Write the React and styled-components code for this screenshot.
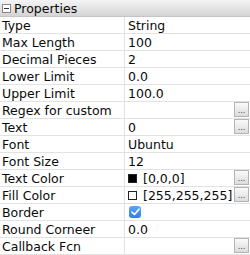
import React from "react";
import styled, { createGlobalStyle } from "styled-components";

const Global = createGlobalStyle`
  html, body { margin: 0; padding: 0; background: #fff; }
  body { font-family: "DejaVu Sans", "Liberation Sans", sans-serif; }
`;

const Panel = styled.div`
  width: 250px;
  height: 255px;
  overflow: hidden;
  background: #fff;
  font-size: 12.5px;
  color: #0a0a0a;
`;

const Header = styled.div`
  height: 17px;
  box-sizing: border-box;
  display: flex;
  align-items: center;
  gap: 3px;
  padding-left: 2px;
  background: linear-gradient(#f4f4f4, #d4d4d4);
  border-bottom: 1px solid #c4c4c4;
  font-size: 12.5px;
`;

const Toggle = styled.span`
  width: 7px;
  height: 7px;
  border: 1px solid #888;
  background: #fff;
  display: flex;
  align-items: center;
  justify-content: center;
  &::after {
    content: "";
    width: 5px;
    height: 1px;
    background: #333;
  }
`;

const Row = styled.div`
  height: 17px;
  box-sizing: border-box;
  display: grid;
  grid-template-columns: 125px 1fr;
  border-bottom: 1px solid #e2e2e2;
`;

const Name = styled.div`
  padding-left: 2px;
  border-right: 1px solid #e2e2e2;
  display: flex;
  align-items: center;
  white-space: nowrap;
  overflow: hidden;
`;

const Value = styled.div`
  padding-left: 3px;
  display: flex;
  align-items: center;
  gap: 6px;
  position: relative;
  white-space: nowrap;
`;

const Dots = styled.div`
  position: absolute;
  right: 1px;
  top: 0px;
  width: 15px;
  height: 15px;
  box-sizing: border-box;
  border: 1px solid #b4b4b4;
  background: linear-gradient(#fafafa, #dcdcdc);
  font-size: 8px;
  color: #444;
  display: flex;
  align-items: flex-end;
  justify-content: center;
  line-height: 10px;
`;

const Swatch = styled.span`
  width: 9px;
  height: 9px;
  box-sizing: border-box;
  border: 1px solid #222;
  background: ${(p) => p.$color};
`;

const Check = styled.span`
  width: 12px;
  height: 12px;
  margin-left: 1px;
  border-radius: 3px;
  background: linear-gradient(#5aa9f8, #2f7de6);
  display: flex;
  align-items: center;
  justify-content: center;
`;

const rows = [
  { n: "Type", v: "String" },
  { n: "Max Length", v: "100" },
  { n: "Decimal Pieces", v: "2" },
  { n: "Lower Limit", v: "0.0" },
  { n: "Upper Limit", v: "100.0" },
  { n: "Regex for custom", v: "", btn: true },
  { n: "Text", v: "0", btn: true },
  { n: "Font", v: "Ubuntu" },
  { n: "Font Size", v: "12" },
  { n: "Text Color", v: "[0,0,0]", color: "#000", btn: true },
  { n: "Fill Color", v: "[255,255,255]", color: "#fff", btn: true },
  { n: "Border", check: true },
  { n: "Round Corneer", v: "0.0" },
  { n: "Callback Fcn", v: "", btn: true },
];

export default function App() {
  return (
    <Panel>
      <Global />
      <Header>
        <Toggle />
        <span>Properties</span>
      </Header>
      {rows.map((r) => (
        <Row key={r.n}>
          <Name>{r.n}</Name>
          <Value>
            {r.color && <Swatch $color={r.color} />}
            {r.check ? (
              <Check>
                <svg width="9" height="8" viewBox="0 0 9 8">
                  <path d="M1 4.2 L3.5 6.5 L8 1.2" fill="none" stroke="#fff" strokeWidth="1.6" strokeLinecap="round" strokeLinejoin="round" />
                </svg>
              </Check>
            ) : (
              <span>{r.v}</span>
            )}
            {r.btn && <Dots>...</Dots>}
          </Value>
        </Row>
      ))}
    </Panel>
  );
}
